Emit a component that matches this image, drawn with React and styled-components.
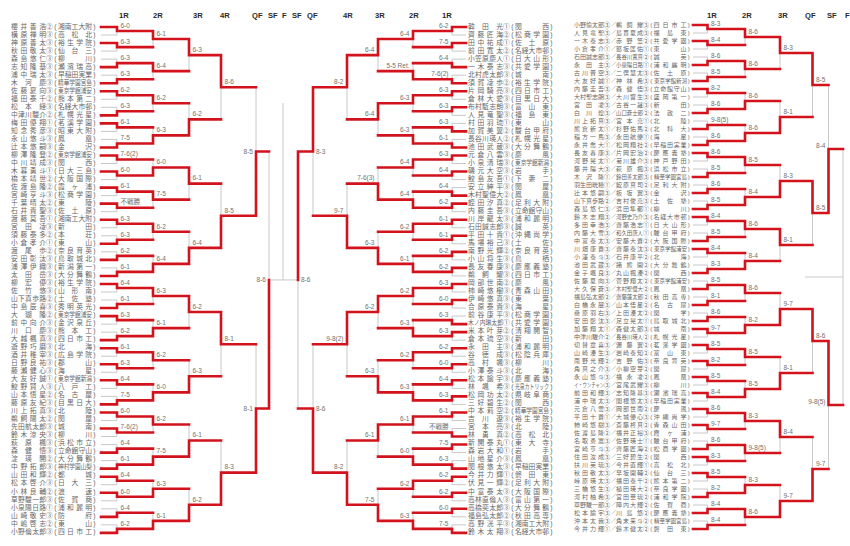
import React from "react";
import styled, { createGlobalStyle } from "styled-components";

/* ---------------- COLOURS ---------------- */
const RED = "#d3121b";
const GRAY = "#c2c2c2";

/* ---------------- DATA ---------------- */
const rows = (s) => s.trim().split("\n").map((l) => l.trim().split("|"));

const LEFT = rows(`
櫻井善浩|②|湘南工大附
横原禅明|③|高松北
神原善太|③|裕生学院
秋田敬太|③|仙台三
森島悠仁|③|柳川
志知隆基|③|瀬濱瑞高
浦中瑞太|③|早稲田実業
木河慶|③|精華学園宮島
佐藤夏向|③|東京学館浦安
福田泰千|②|熊本第二
松本経|③|名経大市邨
中津川駿介|②|札幌光星
梅田優翔|①|茗溪学園
知念秀彦|③|昭東大附
永山悠斗|③|鳳凰
辻本悠嗣|③|金沢
柳澤隆登|②|東京学館浦安
中川靖成|③|関西
木暮勇斗|①|日大三島
橋本靖世|②|大阪国際
佐渡島隆|②|霞ヶ浦
宮崎亨斗|③|松商学園
千葉晴太|②|東陵
石井貴聖|③|佐土原
渡藤莫吾|①|湘南工大附
宮田凌|③|新田
須藤泰多|②|本荘
小倉孝介|①|東山
渡尾歩|②|奈良育英
安田彰汰|③|鳥取城北
浦澤伊織|③|新潟第一
太田岳|③|大分舞鶴
柳宏優|③|裕生学院
佐竹悠|③|山形南
山下真歩路|②|土佐塾
中島辰喜|③|秀明英光
大瑚隆|②|東京学館浦安
前中向介|③|金沢泉丘
川口慶|③|熊本工
大越楓真|③|四日市工
遊野巧磨|③|北海
酒井稚宰|③|広島学院
日野良祐|③|郡山
藤瀬健心|③|海星
大友好誠|①|東京学館新潟
鮫野賢人|③|八戸工
山本悟星|②|名古屋
藤原友紀|③|目黒日大
川上拓真|③|北陸
鵜飼陽太|②|関屋
先田航太郎|③|城南
鈴木涼央|③|柳川
萩原楓|③|浜松市立
森健悟|③|立命館守山
淀瑛開|②|大分舞鶴
中野拓郎|③|神村学園山梨
山田和輝|②|都城
松本啓介|③|日大三
小林良輔|②|浪速
草野駿一郎|③|佐賀商
小泉陽日路|①|浦和麗明
山崎敬史|③|防府
中嶋啓志|②|東山
小野倫太郎|③|四日市工
`);

const MID = rows(`
韓田光|①|関西
齊藤匠海|②|松商学園
田中祐成|①|佐土原
前田寛太|②|名経大市邨
小笠原慶人|①|日大山形
一木泰志|③|共愛学園
北村虎太郎|③|城南
須賀凌歩|②|裕生学院
片岡騎亮|③|四日市工
倉林大愛|③|目黒日大
布村駈志朗|③|富山東
人見竜聖|③|福島東
村田羽琉|①|東山
加賀美翼|②|駿台甲府
長谷川瑛人|②|札幌光星
池田武蔵|③|大分舞鶴
元倉八雲|③|慶風
小泉清瑞|③|東京学館新潟
磯元大空|③|岩手
鮫島友吾|①|下妻二
安立紳平|③|関屋
木村聖偉大|②|鳳凰
蛭田汐真|②|足利大附
内藤圭吾|③|立命館守山
川岸龍太|③|浦和麗明
石田誠志郎|③|誠英
平田十貴|①|沖縄尚学
馬場裕己|③|土佐
南野光輝|②|奈良育英
小山将生|③|鳥栖
長友春康|③|慶應義塾
鵜飼耀|③|四日市工
岡部世南|②|慶風
柿崎悠樹|③|青森山田
伊崎悠真|③|東葉
合原泰貴|③|海星
前谷康平|③|松商学園
木ノ内琳太郎|①|共愛学園
米本叶芽|②|清翔開智
倉本琉空|③|新田
永田主|③|浦和麗明
谷徳成|③|松陰兵庫
高村颯|③|柳川
小澤泰斗|③|北海
松本諭宇|③|慶應義塾
林颯希|③|光泉カトリック
松岡功太|②|県岐阜商
三好碧生|②|関西
中本莉空|②|精華学園宮島
吉川遼|③|裕生学院
宮本亮|③|北陸
林勇真|②|高松北
新開泰丸|①|東大寺
森岩大和|①|岩手
山地星介|③|鳳凰
関根悠太|③|早稲田実業
今井力輝|①|磐田東
伏見一輝|②|足利大附
中富泰太|③|大阪国際
高林直倫人|③|富山第一
高橋奕太郎|③|大分舞鶴
福島弘太郎|②|秋田高専
高野洸平|③|湘南工大附
鈴木太翔|③|名経大市邨
`);

const PAIRS = rows(`
小野愉太郎|③|鵜飼耀|③|四日市工
人見竜聖|③|島貫夏成|③|福島東
一木泰志|③|赤野笠|②|共愛学園
小倉孝介|①|怒坂匡佑|①|東山
石田誠志郎|③|長谷川寛真|②|誠英
永田主|③|小泉陽日路|①|浦和麗明
古川晋空|③|二俣慧太|③|佐土原
大友好誠|①|神林希|③|東京学館新潟
内藤圭吾|③|森健悟|③|立命館守山
大村聖志朗|③|大川響生|③|盛岡第一
宮田凌|③|古谷一晟|③|新田
白川煌|③|山口蒼士郎|②|法政二
川上拓真|③|宮本亮|①|北陸
熊倉新太|①|杉野佑馬|②|北科大
稲方一馬|③|永田航優|①|海星
永井喬大|①|松岡翔社|②|早稲田実業
長友春康|③|片岡宏治|②|慶應義塾
河野晃太|①|菊川雄介|③|神戸野田
藤井陽大|③|萩原楓|③|浜松市立
木沢隆|①|鈴田善太郎|③|精華学園宮島
羽生田晄穂|①|鮫原真司|②|足利大附
辻本悠嗣|③|板坂翼|③|金沢
山下真歩路|②|吉村俊亮|③|土佐塾
森島悠仁|③|浜田隼都|①|柳川
鈴木志翔|③|河野史乃介|③|名経大市邨
多田幸浩|③|齋藤浩志|①|日大山形
内藤大雪|③|和久田唐人|①|駿台甲府
中富泰太|③|安藤大貴|②|大阪国際
川畑康貴|③|齋藤泰汰|③|東京学館浦安
小澤泰斗|③|石井康平|②|北海
池田武蔵|③|諸熊開|②|大分舞鶴
金子颯良|③|丸山楓湊|②|関西
佐藤夏向|③|菅野翔太|②|東京学館浦安
大久保蒼|③|木村聖偉大|②|鳳凰
福島弘太郎|②|齋藤蓮太郎|②|秋田高専
白橋永展|③|山本悟星|②|名古屋
桑原羽右|③|上田湊太|②|関学
安田彰汰|③|足立晃太|①|鳥取城北
加藤翔太|①|森健太郎|③|城南
中津川駿介|②|長谷川瑛人|②|札幌光星
切替章喜|③|渥藤翼|②|茗溪学園
山崎湊生|③|岩崎泰知|②|富山東
南野光輝|②|吉野佑|③|奈良育英
角真之介|③|小柳空芽|②|関屋
永山悠斗|③|福永凌|②|鳳凰
イ・ウンチャン|③|宮尾武耀|③|柳川
前田和輝|③|志知隆基|③|瀬濱瑞高
浦中瑞太|③|関根悠太|③|早稲田実業
元倉八雲|③|岡部世南|②|慶風
平田十貴|①|大城優心|③|沖縄尚学
柿崎悠樹|③|斎藤柊真|②|青森山田
佐渡島隆|②|福井正裕|③|霞ヶ浦
名取勇嵩|③|佐野瑛士|①|駿台甲府
宮崎亨斗|③|齊藤匠海|②|松商学園
住田汝成|③|三好碧生|②|関西
扶川英琉|③|今井直輝|①|高松北
秋田敬太|③|早坂開輔|②|仙台三
峠原瑛太|③|福田泰千|②|熊本第二
三橋悠生|③|植田瑛大|②|奈良学園
河村柚希|③|宮田華琉|②|浦和学院
草野駿一郎|③|陣内大輝|②|佐賀商
松本諭宇|③|川島悠|②|慶應義塾
沖本太我|③|角末来斗|②|精華学園宮島
今井力輝|①|鈴木健太|②|磐田東
`);

// each round: "w:score" where w = 0 top won, 1 bottom won
const res = (...rounds) =>
  rounds.map((r) => r.trim().split(/\s+/).map((m) => {
    const [w, s] = m.split(":");
    return [Number(w), s.replace("_", " ")];
  }));

const LEFT_RES = res(
  `0:6-0 0:6-3 1:6-3 1:6-3 0:6-2 1:6-3 0:6-1 1:7-5 0:7-6(2) 0:6-0 0:6-1 0:不戦勝 0:6-3 1:6-3 1:6-2 1:6-1
   0:6-4 1:6-1 0:6-3 1:6-2 0:6-1 0:6-3 0:6-4 1:7-5 0:6-0 0:7-6(2) 1:6-4 1:6-1 0:6-4 0:6-0 1:6-4 1:6-2`,
  `0:6-1 0:6-4 0:6-2 1:6-3 1:6-0 0:7-5 0:6-2 1:6-4 0:6-3 1:6-1 0:6-2 1:6-0 0:6-2 1:7-5 1:6-3 1:6-1`,
  `0:6-3 1:6-2 0:6-1 1:6-4 0:6-2 1:6-3 1:6-1 1:6-2`,
  `0:8-6 1:8-5 0:8-1 1:8-3`,
  `1:8-5 1:8-1`,
  `1:8-6`
);

const MID_RES = res(
  `0:6-2 0:7-5 1:6-4 1:7-6(2) 0:6-3 0:6-3 1:6-3 1:6-1 0:6-3 0:6-4 1:6-4 0:6-2 0:6-1 0:6-1 0:6-2 0:6-2
   0:6-3 0:6-0 1:6-3 0:6-3 0:6-2 0:6-0 0:6-4 0:6-3 0:6-1 1:不戦勝 0:7-5 1:6-3 0:6-2 0:6-2 0:6-0 1:7-5`,
  `0:6-4 1:5-5_Ret. 0:6-3 1:6-3 0:6-4 1:6-4 0:6-2 1:6-1 0:6-2 1:6-3 0:6-2 1:6-3 0:6-1 1:6-0 0:6-2 1:6-3`,
  `0:6-4 0:6-4 1:7-6(3) 1:6-3 0:6-2 1:6-3 0:6-1 1:7-5`,
  `0:8-2 1:9-7 0:9-8(2) 1:8-2`,
  `0:8-3 1:8-6`,
  `0:8-6`
);

const PAIR_RES = res(
  `0:8-3 0:8-4 1:8-6 1:8-5 0:8-2 1:8-6 1:9-8(5) 1:8-6 0:8-6 1:8-5 1:8-6 1:8-5 0:8-4 1:8-5 0:8-4 1:8-3
   1:8-5 1:8-1 1:8-6 0:9-7 0:8-5 0:8-2 0:8-5 0:8-4 0:8-6 0:9-7 1:8-6 0:8-3 0:8-5 1:8-2 1:8-4 1:8-4`,
  `0:8-6 0:8-6 1:8-6 1:8-6 0:8-5 1:8-4 0:8-6 1:8-4 0:8-6 1:8-2 0:8-5 1:8-5 0:8-3 0:9-8(5) 1:8-3 0:8-6`,
  `0:8-3 1:8-1 1:8-3 0:8-1 1:9-7 1:8-1 0:8-4 1:9-7`,
  `0:8-5 0:8-5 0:8-6 1:9-7`,
  `1:8-4 0:9-8(5)`
);

/* ---------------- BRACKET GEOMETRY ---------------- */
function build({ n, y0, dy, xStart, xs, dir, results, inLabel, inDy }) {
  const red = [];
  const gray = [];
  const labels = [];
  let ys = Array.from({ length: n }, (_, i) => y0 + i * dy);

  results[0].forEach(([w], m) => {
    [0, 1].forEach((s) => (s === w ? red : gray).push(`M${xStart} ${ys[2 * m + s]}H${xs[0]}`));
  });

  results.forEach((round, k) => {
    const x = xs[k];
    const next = [];
    round.forEach(([w, score], m) => {
      const a = ys[2 * m];
      const b = ys[2 * m + 1];
      const mid = (a + b) / 2;
      (w === 0 ? red : gray).push(`M${x} ${a}V${mid}`);
      (w === 1 ? red : gray).push(`M${x} ${mid}V${b}`);
      if (k + 1 < xs.length) red.push(`M${x} ${mid}H${xs[k + 1]}`);
      const inside = inLabel.includes(k);
      const side = inside ? -dir : dir;
      labels.push({
        x: x + side * (inside ? 3 : 3.5),
        y: inside ? mid + inDy : mid - 3.2,
        anchor: side > 0 ? "start" : "end",
        t: score,
      });
      next.push(mid);
    });
    ys = next;
  });
  return { red, gray, labels, ends: ys };
}

const left = build({
  n: 64, y0: 27, dy: 8.03, xStart: 101, xs: [117, 153, 189, 221, 256, 269],
  dir: 1, results: LEFT_RES, inLabel: [4, 5], inDy: 2.2,
});
const mid = build({
  n: 64, y0: 27, dy: 8.03, xStart: 466, xs: [452, 413, 378, 347, 313, 298],
  dir: -1, results: MID_RES, inLabel: [4, 5], inDy: 2.2,
});
const pairs = build({
  n: 64, y0: 25, dy: 8, xStart: 693, xs: [707.5, 745, 780, 812.5, 828.5],
  dir: 1, results: PAIR_RES, inLabel: [4], inDy: -1,
});

const finalY = left.ends[0];
const [s1, s2] = pairs.ends;

const MAIN_HEADS = [
  ["1R", 119], ["2R", 153], ["3R", 193], ["4R", 220], ["QF", 252], ["SF", 268], ["F", 282],
  ["SF", 292], ["QF", 307], ["4R", 343], ["3R", 375], ["2R", 409], ["1R", 442],
];
const PAIR_HEADS = [["1R", 707], ["2R", 742], ["3R", 778], ["QF", 805], ["SF", 827], ["F", 845]];

/* ---------------- GLOBAL ---------------- */
const GlobalStyle = createGlobalStyle`
  html, body {
    margin: 0;
    padding: 0;
    background: #ffffff;
  }
  body {
    font-family: "Liberation Sans", "Noto Sans CJK JP", sans-serif;
  }
`;

/* ---------------- STYLES ---------------- */
const Page = styled.div`
  display: flex;
  width: 850px;
  height: 546px;
  overflow: hidden;
  background: #ffffff;
`;

const Panel = styled.section`
  display: flex;
  flex: none;
`;

const Names = styled.div`
  flex: none;
  box-sizing: border-box;
  width: ${(p) => p.$w}px;
  padding: ${(p) => p.$top}px 0 0 ${(p) => p.$left}px;
  display: flex;
  flex-direction: column;
`;

/* Latin face first keeps each line box inside its 8px row; kanji fall through to Noto CJK */
const Row = styled.div`
  display: flex;
  align-items: center;
  height: ${(p) => p.$h}px;
  font-family: "Liberation Sans", "Noto Sans CJK JP", sans-serif;
  font-size: ${(p) => p.$fs}px;
  line-height: 1;
  color: #666666;
  white-space: nowrap;
`;

const Cell = styled.span`
  flex: none;
  width: ${(p) => p.$w}px;
  text-align: center;
`;

const FitBox = styled.span`
  flex: none;
  display: inline-block;
  width: ${(p) => p.$w}px;
`;

const FitText = styled.span`
  display: inline-block;
  width: ${(p) => p.$w / p.$k}px;
  text-align: justify;
  text-align-last: justify;
  transform: scaleX(${(p) => p.$k});
  transform-origin: 0 50%;
`;

const Chart = styled.svg`
  display: block;
  flex: none;
  overflow: visible;
`;

const Score = styled.text`
  font-family: "Liberation Sans", "Noto Sans CJK JP", sans-serif;
  font-size: 6.5px;
  fill: #707070;
`;

const Round = styled.text`
  font-family: "Liberation Sans", Arial, sans-serif;
  font-size: 7.6px;
  font-weight: 700;
  fill: #2a2a2a;
`;

/* ---------------- PARTS ---------------- */
function Fit({ w, size, children }) {
  const k = Math.min(1, w / (children.length * size));
  return (
    <FitBox $w={w}>
      <FitText $w={w} $k={k}>{children}</FitText>
    </FitBox>
  );
}

function Single({ p: [name, grade, school] }) {
  return (
    <Row $h={8.03} $fs={6.8}>
      <Fit w={35} size={6.8}>{name}</Fit>
      <Cell $w={7}>{grade}</Cell>
      <Cell $w={5}>(</Cell>
      <Fit w={34} size={6.8}>{school}</Fit>
      <Cell $w={5}>)</Cell>
    </Row>
  );
}

function Pair({ p: [a, ga, b, gb, school] }) {
  return (
    <Row $h={8} $fs={6}>
      <Fit w={30} size={6}>{a}</Fit>
      <Cell $w={6}>{ga}</Cell>
      <Cell $w={6}>／</Cell>
      <Fit w={27} size={6}>{b}</Fit>
      <Cell $w={6}>{gb}</Cell>
      <Cell $w={4.5}>(</Cell>
      <Fit w={33} size={6}>{school}</Fit>
      <Cell $w={4.5}>)</Cell>
    </Row>
  );
}

function BracketChart({ x0, width, heads, parts, red = [], gray = [] }) {
  const reds = [...parts.flatMap((p) => p.red), ...red];
  const grays = [...parts.flatMap((p) => p.gray), ...gray];
  const labels = parts.flatMap((p) => p.labels);
  return (
    <Chart width={width} height={546} viewBox={`${x0} 0 ${width} 546`}>
      <path d={grays.join("")} stroke={GRAY} strokeWidth={0.9} fill="none" />
      <path d={reds.join("")} stroke={RED} strokeWidth={2.6} fill="none" strokeLinecap="square" />
      {heads.map(([t, x], i) => (
        <Round key={i} x={x} y={18}>{t}</Round>
      ))}
      {labels.map((l, i) => (
        <Score key={i} x={l.x} y={l.y} textAnchor={l.anchor}>{l.t}</Score>
      ))}
    </Chart>
  );
}

/* ---------------- COMPONENT ---------------- */
export default function App() {
  return (
    <>
      <GlobalStyle />
      <Page>
        <Panel>
          <Names $w={98} $top={22.985} $left={11}>
            {LEFT.map((p, i) => <Single key={i} p={p} />)}
          </Names>
          <BracketChart
            x0={98}
            width={368}
            heads={MAIN_HEADS}
            parts={[left, mid]}
            gray={[`M269 ${finalY}H298`, `M283 103V${finalY}`]}
          />
          <Names $w={94} $top={22.985} $left={2}>
            {MID.map((p, i) => <Single key={i} p={p} />)}
          </Names>
        </Panel>
        <Panel>
          <Names $w={133} $top={21} $left={14}>
            {PAIRS.map((p, i) => <Pair key={i} p={p} />)}
          </Names>
          <BracketChart
            x0={693}
            width={157}
            heads={PAIR_HEADS}
            parts={[pairs]}
            red={[`M828.5 ${s1}H843`, `M828.5 ${s2}H843`]}
            gray={[`M843 ${s1}V${s2}`, `M805 ${(s1 + s2) / 2}H843`]}
          />
        </Panel>
      </Page>
    </>
  );
}
